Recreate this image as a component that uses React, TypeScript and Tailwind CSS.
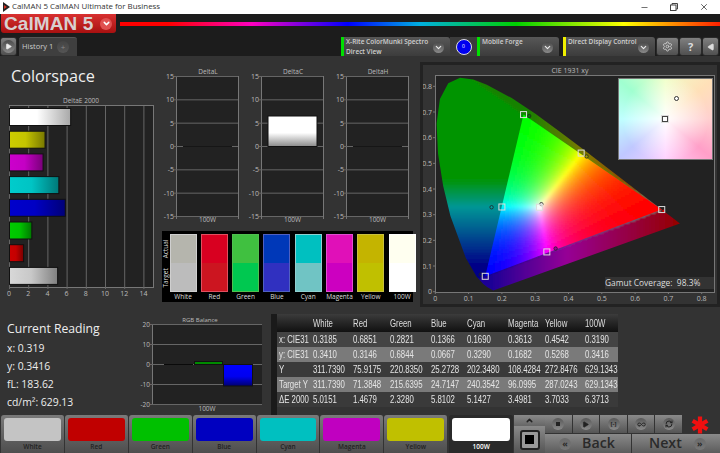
import React, { FC, ReactNode } from 'react'
import { Asterisk, Settings, Play, Infinity as InfinityIcon, RefreshCw, ChevronDown, ChevronUp, Minus, X } from 'lucide-react'

const UI = { fontFamily: '"Open Sans", "Noto Sans", sans-serif' }

// ---- gamut drawing helpers
const RV = [0.68, 0.32], GV = [0.265, 0.69], BV = [0.15, 0.06]
const bary = (x: number, y: number) => {
    const d = (GV[1] - BV[1]) * (RV[0] - BV[0]) + (BV[0] - GV[0]) * (RV[1] - BV[1])
    const r = ((GV[1] - BV[1]) * (x - BV[0]) + (BV[0] - GV[0]) * (y - BV[1])) / d
    const g = ((BV[1] - RV[1]) * (x - BV[0]) + (RV[0] - BV[0]) * (y - BV[1])) / d
    return [r, g, 1 - r - g]
}
const WP = bary(0.3127, 0.329)
const mix = (a: number[], b: number[], t: number) => {
    const k = Math.min(Math.max(t, 0), 1)
    return a.map((v, i) => v + (b[i] - v) * k)
}
const rgb = (c: number[]) => `rgb(${c.map(v => Math.round(v)).join(',')})`

const innerColor = (x: number, y: number) => {
    const c = bary(x, y).map((v, i) => Math.max(v, 0) / WP[i])
    const m = Math.max(...c) || 1
    return rgb(c.map(v => Math.pow(v / m, 1.55) * 255))
}
// the dim part of the horseshoe, outside of the triangle
const outerColor = (x: number, y: number) => {
    const w = bary(x, y)
    if (w[1] < 0) {
        // under the blue-red edge
        const t = (x - 0.17) / 0.56
        return rgb(t < 0.4 ? mix([30, 0, 150], [150, 0, 150], t / 0.4) : mix([150, 0, 150], [150, 0, 0], (t - 0.4) / 0.6))
    }
    if (w[2] < 0) {
        // along the green-red edge
        const t = (x - 0.27) / 0.41
        return rgb(t < 0.45 ? mix([20, 130, 0], [130, 120, 0], t / 0.45) : mix([130, 120, 0], [150, 20, 0], (t - 0.45) / 0.55))
    }
    if (y > 0.33) return rgb(mix([0, 150, 150], [0, 148, 0], (y - 0.33) / 0.11))
    return rgb(mix([0, 0, 135], [0, 150, 150], (y - 0.1) / 0.23))
}
const px = (x: number) => 12.3 + 333 * x
const py = (y: number) => 216.7 - 256.7 * y

const LOCUS = [
    [0.1741, 0.005], [0.1566, 0.0177], [0.144, 0.0297], [0.1241, 0.0578], [0.0913, 0.1327], [0.0454, 0.295],
    [0.0235, 0.4127], [0.0082, 0.5384], [0.0039, 0.6548], [0.0139, 0.7502], [0.0389, 0.812], [0.0743, 0.8338],
    [0.1142, 0.8262], [0.1547, 0.8059], [0.2296, 0.7543], [0.3016, 0.6923], [0.3731, 0.6245], [0.4441, 0.5547],
    [0.5125, 0.4866], [0.5752, 0.4242], [0.627, 0.3725], [0.6915, 0.3083], [0.7347, 0.2653],
]

const outerCells: { x: number; y: number; fill: string }[] = []
const innerCells: { x: number; y: number; fill: string }[] = []
for (let sy = -4; sy < 224; sy += 2) {
    for (let sx = 8; sx < 266; sx += 2) {
        const x = (sx + 1 - 12.3) / 333
        const y = (216.7 - sy - 1) / 256.7
        outerCells.push({ x: sx, y: sy, fill: outerColor(x, y) })
        if (bary(x, y).every(v => v > -0.06)) innerCells.push({ x: sx, y: sy, fill: innerColor(x, y) })
    }
}

const targets = [[0.3127, 0.329], [0.68, 0.32], [0.265, 0.69], [0.15, 0.06], [0.2, 0.33], [0.335, 0.155], [0.438, 0.54]]
const measured = [
    [0.3185, 0.341, '#ddd'], [0.6851, 0.3146, '#e00000'], [0.2821, 0.6844, '#008000'], [0.1366, 0.0667, '#000090'],
    [0.169, 0.329, '#00a0a0'], [0.3613, 0.1682, '#a000a0'], [0.4542, 0.5268, '#a0a000'],
] as [number, number, string][]

const CieChart = () => (
    <svg width={294} height={229} className="block">
        <defs>
            <clipPath id="locus">
                <polygon points={LOCUS.map(p => `${px(p[0])},${py(p[1])}`).join(' ')} />
            </clipPath>
            <clipPath id="gamut">
                <polygon points={[RV, GV, BV].map(p => `${px(p[0])},${py(p[1])}`).join(' ')} />
            </clipPath>
            <filter id="soft" x="-5%" y="-5%" width="110%" height="110%">
                <feGaussianBlur stdDeviation="0.8" />
            </filter>
        </defs>
        <rect x={12.5} y={0.5} width={279} height={217} fill="#222" stroke="#777" />
        <g clipPath="url(#locus)">
            <g filter="url(#soft)" shapeRendering="crispEdges">
                {outerCells.map((c, i) => <rect key={i} x={c.x} y={c.y} width={2.2} height={2.2} fill={c.fill} />)}
            </g>
        </g>
        <g clipPath="url(#gamut)">
            <g filter="url(#soft)" shapeRendering="crispEdges">
                {innerCells.map((c, i) => <rect key={i} x={c.x} y={c.y} width={2.2} height={2.2} fill={c.fill} />)}
            </g>
        </g>
        {[0, 0.1, 0.2, 0.3, 0.4, 0.5, 0.6, 0.7, 0.8].map(t => (
            <g key={t} fontSize={7} fill="#bbb">
                <text x={px(t)} y={226} textAnchor="middle">{t}</text>
                <text x={9} y={py(t) + 2.5} textAnchor="end">{t}</text>
                <line x1={px(t)} x2={px(t)} y1={217} y2={219} stroke="#777" />
                <line x1={10} x2={12} y1={py(t)} y2={py(t)} stroke="#777" />
            </g>
        ))}
        {measured.map((m, i) => (
            <circle key={i} cx={px(m[0])} cy={py(m[1])} r={1.7} fill={m[2]} stroke="#222" strokeWidth={0.8} />
        ))}
        {targets.map((t, i) => (
            <rect key={i} x={px(t[0]) - 3} y={py(t[1]) - 3} width={6} height={6} fill={i === 0 ? '#ffffff90' : 'none'} stroke="#ddd" strokeWidth={1} />
        ))}
    </svg>
)

// ---- bars on the left
const DELTA_BARS = [
    { v: 6.3713, id: 'w2', c: ['#ffffff', '#ffffff', '#a8a8a8'] },
    { v: 3.7033, id: 'y', c: ['#cccc00', '#c4c400', '#787800'] },
    { v: 3.4981, id: 'm', c: ['#cc00cc', '#c400c4', '#780078'] },
    { v: 5.1427, id: 'c', c: ['#00cccc', '#00c4c4', '#007878'] },
    { v: 5.8102, id: 'b', c: ['#0000cc', '#0000c4', '#000078'] },
    { v: 2.328, id: 'g', c: ['#00cc00', '#00c400', '#007800'] },
    { v: 1.4679, id: 'r', c: ['#cc0000', '#c40000', '#780000'] },
    { v: 5.0151, id: 'w', c: ['#d8d8d8', '#c8c8c8', '#808080'] },
]

const DeltaEChart = () => (
    <svg width={160} height={210} className="block">
        <defs>
            {DELTA_BARS.map(b => (
                <linearGradient key={b.id} id={`bar-${b.id}`}>
                    <stop offset="0" stopColor={b.c[0]} />
                    <stop offset="0.45" stopColor={b.c[1]} />
                    <stop offset="1" stopColor={b.c[2]} />
                </linearGradient>
            ))}
        </defs>
        <text x={81} y={7} fontSize={6.5} fill="#bbb" textAnchor="middle">DeltaE 2000</text>
        <rect x={9.5} y={9.5} width={144} height={182} fill="#222" stroke="#777" />
        {[0, 2, 4, 6, 8, 10, 12, 14].map(t => (
            <g key={t}>
                <line x1={9.5 + t * 9.6} x2={9.5 + t * 9.6} y1={10} y2={193} stroke="#666" />
                <text x={9 + t * 9.6} y={200} fontSize={7} fill="#bbb" textAnchor="middle">{t}</text>
            </g>
        ))}
        {DELTA_BARS.map((b, i) => (
            <rect key={b.id} x={9.5} y={12.5 + i * 22.7} width={b.v * 9.6} height={17} fill={`url(#bar-${b.id})`} stroke="#111" />
        ))}
    </svg>
)

const DeltaChart: FC<{ title: string; bar?: boolean }> = ({ title, bar }) => (
    <svg width={85} height={155} className="block">
        <defs>
            <linearGradient id={`dc-${title}`} x1="0" x2="0" y1="0" y2="1">
                <stop offset="0" stopColor="#fff" />
                <stop offset="0.55" stopColor="#fff" />
                <stop offset="1" stopColor="#8a8a8a" />
            </linearGradient>
        </defs>
        <text x={48} y={6} fontSize={6.5} fill="#bbb" textAnchor="middle">{title}</text>
        <rect x={16.5} y={8.5} width={62} height={140} fill="#222" stroke="#777" />
        {[15, 10, 5, 0, -5, -10, -15].map(t => {
            const y = 78.5 - t * 4.667
            return (
                <g key={t}>
                    <line x1={14} x2={78} y1={y} y2={y} stroke="#666" />
                    <text x={14} y={y + 2.5} fontSize={7} fill="#bbb" textAnchor="end">{t}</text>
                </g>
            )
        })}
        {bar
            ? <rect x={23} y={48} width={49} height={30.5} fill={`url(#dc-${title})`} stroke="#111" />
            : <line x1={23} x2={72} y1={78.5} y2={78.5} stroke="#161616" />}
        <line x1={78.5} x2={78.5} y1={148} y2={151} stroke="#777" />
        <line x1={16.5} x2={16.5} y1={148} y2={151} stroke="#777" />
        <text x={47.5} y={154} fontSize={6.5} fill="#bbb" textAnchor="middle">100W</text>
    </svg>
)

const RgbBalance = () => (
    <svg width={124} height={102} className="block">
        <defs>
            <linearGradient id="rgb-blue" x1="0" x2="0" y1="0" y2="1">
                <stop offset="0" stopColor="#0000ff" />
                <stop offset="0.55" stopColor="#0000f0" />
                <stop offset="1" stopColor="#000070" />
            </linearGradient>
        </defs>
        <text x={62} y={12} fontSize={6} fill="#bbb" textAnchor="middle">RGB Balance</text>
        <rect x={14.5} y={14.5} width={110} height={80} fill="#222" stroke="#777" />
        {[20, 10, 0, -10, -20].map(t => {
            const y = 54.5 - t * 2
            return (
                <g key={t}>
                    <line x1={12} x2={124} y1={y} y2={y} stroke="#666" />
                    <text x={12} y={y + 2.5} fontSize={6.5} fill="#bbb" textAnchor="end">{t}</text>
                </g>
            )
        })}
        <line x1={26} x2={55} y1={54.5} y2={54.5} stroke="#0a0a0a" />
        <rect x={56.5} y={51.5} width={28} height={3} fill="#008a00" stroke="#111" />
        <rect x={85.5} y={54.5} width={29} height={21.5} fill="url(#rgb-blue)" stroke="#111" />
        <text x={69} y={101} fontSize={6.5} fill="#bbb" textAnchor="middle">100W</text>
    </svg>
)

// ---- table
const TABLE = [
    { label: 'x: CIE31', bg: 'bg-[#444444]', values: ['0.3185', '0.6851', '0.2821', '0.1366', '0.1690', '0.3613', '0.4542', '0.3190'] },
    { label: 'y: CIE31', bg: 'bg-[#7a7a7a]', values: ['0.3410', '0.3146', '0.6844', '0.0667', '0.3290', '0.1682', '0.5268', '0.3416'] },
    { label: 'Y', bg: 'bg-[#3a3a3a]', values: ['311.7390', '75.9175', '220.8350', '25.2728', '202.3480', '108.4284', '272.8476', '629.1343'] },
    { label: 'Target Y', bg: 'bg-[#7a7a7a]', values: ['311.7390', '71.3848', '215.6395', '24.7147', '240.3542', '96.0995', '287.0243', '629.1343'] },
    { label: 'ΔE 2000', bg: 'bg-[#3a3a3a]', values: ['5.0151', '1.4679', '2.3280', '5.8102', '5.1427', '3.4981', '3.7033', '6.3713'] },
]
const HEADERS = ['White', 'Red', 'Green', 'Blue', 'Cyan', 'Magenta', 'Yellow', '100W']
const TABLE_COLS = 'grid grid-cols-[34px_40px_37px_41px_36px_41px_37px_40px_33px] pl-[2px]'
const TABLE_FONT = { fontFamily: '"Liberation Sans", sans-serif' }

// the font in the picture is narrower than anything installed, so it is squeezed
const Cell: FC<{ children: ReactNode }> = ({ children }) => (
    <span className="block origin-left scale-x-[0.78] whitespace-nowrap">{children}</span>
)

const ReadingTable = () => (
    <div className="w-[347px] mt-[4px] border-l-[6px] border-[#1a1a1a] text-[10px] leading-[15px]" style={TABLE_FONT}>
        <div className={`${TABLE_COLS} h-[18px] items-center text-[#ddd] bg-gradient-to-b from-[#3c3c3c] to-[#111111]`}>
            <span />
            {HEADERS.map(h => <Cell key={h}>{h}</Cell>)}
        </div>
        {TABLE.map(row => (
            <div key={row.label} className={`${TABLE_COLS} h-[15px] text-[#e4e4e4] ${row.bg}`}>
                <Cell>{row.label}</Cell>
                {row.values.map((v, i) => <Cell key={i}>{v}</Cell>)}
            </div>
        ))}
    </div>
)

// ---- palette
const PALETTE = [
    { name: 'White', a: '#b5b5ad', t: '#bcbcbc', b: '#cfcfcf' },
    { name: 'Red', a: '#d80020', t: '#cc1520', b: '#e05060' },
    { name: 'Green', a: '#40c040', t: '#00c850', b: '#50c050' },
    { name: 'Blue', a: '#0038b8', t: '#3030c0', b: '#5060c0' },
    { name: 'Cyan', a: '#00c0c0', t: '#70c4c4', b: '#90d0d0' },
    { name: 'Magenta', a: '#e010b8', t: '#cc00c0', b: '#e050d0' },
    { name: 'Yellow', a: '#c4b400', t: '#c0c000', b: '#c8c040' },
    { name: '100W', a: '#fffff0', t: '#ffffff', b: '#ffffff' },
]

const Palette = () => (
    <div className="ml-[2px] mt-[8px] w-[251px] h-[71px] bg-black flex pt-[3px]">
        <div className="w-[7.5px] h-[58px] flex flex-col text-[6.5px] text-[#ddd]">
            <div className="h-[29px] flex items-center justify-center"><span className="-rotate-90">Actual</span></div>
            <div className="h-[29px] flex items-center justify-center"><span className="-rotate-90">Target</span></div>
        </div>
        {PALETTE.map(p => (
            <div key={p.name} className="w-[27px] mr-[4.3px] shrink-0 flex flex-col items-center">
                <div className="w-[27px] h-[58px] flex flex-col border" style={{ borderColor: p.b }}>
                    <div className="flex-1" style={{ background: p.a }} />
                    <div className="flex-1" style={{ background: p.t }} />
                </div>
                <span className="text-[6.5px] text-[#ddd] leading-[9px]">{p.name}</span>
            </div>
        ))}
    </div>
)

// ---- toolbar pieces
const RoundKnob: FC<{ children?: ReactNode; className?: string }> = ({ children, className = '' }) => (
    <span className={`rounded-full bg-gradient-to-b from-[#4a4a4a] to-[#8a8a8a] flex items-center justify-center ${className}`}>{children}</span>
)

const DeviceBox: FC<{ lines: string[]; color: string; className: string }> = ({ lines, color, className }) => (
    <div className={`h-[19px] rounded-t-[3px] bg-gradient-to-b from-[#585858] to-[#3c3c3c] flex ${className}`}>
        <div className="w-[3px] h-full shrink-0" style={{ background: color }} />
        <div className="flex-1 pl-[2px] text-[6.5px] leading-[9.5px] font-semibold text-[#cfcfcf] whitespace-nowrap">
            {lines.map(l => <div key={l}>{l}</div>)}
        </div>
        <RoundKnob className="w-[11px] h-[11px] mt-[5px] mr-[6px] shrink-0">
            <ChevronDown size={9} color="#eee" strokeWidth={3} />
        </RoundKnob>
    </div>
)

const SquareBtn: FC<{ children: ReactNode; className?: string }> = ({ children, className = '' }) => (
    <div className={`h-[19px] rounded-[3px] border border-[#2a2a2a] bg-gradient-to-b from-[#808080] to-[#505050] flex items-center justify-center ${className}`}>{children}</div>
)

const SWATCHES = [
    ['White', 'bg-[#c4c4c4]'], ['Red', 'bg-[#c00000]'], ['Green', 'bg-[#00c000]'], ['Blue', 'bg-[#0000c0]'],
    ['Cyan', 'bg-[#00c0c0]'], ['Magenta', 'bg-[#c000c0]'], ['Yellow', 'bg-[#c0c000]'],
]

const ControlKey: FC<{ children: ReactNode }> = ({ children }) => (
    <div className="w-[29px] h-[19px] border-r border-b border-[#333] bg-gradient-to-b from-[#8a8a8a] to-[#555555] flex items-center justify-center">
        <RoundKnob className="w-[12px] h-[12px] from-[#585858] to-[#6e6e6e]">{children}</RoundKnob>
    </div>
)

const App = () => {
    return (
        <div className="w-[720px] h-[453px] overflow-hidden flex flex-col bg-[#333333]" style={UI}>
            {/* title bar */}
            <div className="h-[14px] bg-white flex items-center text-[#333] shrink-0">
                <svg width={9} height={10} viewBox="0 0 9 10" className="ml-[2px] mr-[1px]">
                    <polygon points="1,0 8,5 1,10" fill="#222" />
                    <polygon points="2,3 5,5 2,7" fill="#d03020" />
                </svg>
                <span className="text-[7.9px] leading-none">CalMAN 5 CalMAN Ultimate for Business</span>
                <div className="ml-auto flex items-center">
                    <Minus size={9} color="#444" className="mr-[21px]" />
                    <svg width={8} height={8} viewBox="0 0 8 8" className="mr-[21px]" fill="none" stroke="#444">
                        <rect x="0.5" y="2" width="5.5" height="5.5" /><path d="M2 2V0.5H7.5V6H6" />
                    </svg>
                    <X size={10} color="#444" className="mr-[11px]" />
                </div>
            </div>

            {/* logo and rainbow */}
            <div className="h-[23px] bg-[#1c1c1c] flex shrink-0">
                <div className="ml-[1px] w-[115px] h-[19px] rounded-b-[3px] bg-gradient-to-b from-[#d83030] to-[#a81010] flex items-center pl-[3px] text-[#d8d0d0]">
                    <span className="w-[90px] text-[19px] font-bold leading-none tracking-[0.1px] whitespace-nowrap" style={{ fontFamily: '"Liberation Sans", sans-serif' }}>CalMAN 5</span>
                    <span className="ml-[6px] w-[12px] h-[12px] rounded-full bg-[#e05050] flex items-center justify-center">
                        <ChevronDown size={9} color="#fff" strokeWidth={4} />
                    </span>
                </div>
                <div className="ml-[4px] mt-[8px] flex-1 h-[4px] bg-[linear-gradient(90deg,#ff0000_8%,#ff00c0_22%,#0000ff_38%,#00b0e0_50%,#00d000_66%,#ffff00_84%,#ff2000_100%)]" />
            </div>

            {/* toolbar */}
            <div className="h-[19px] bg-[#1c1c1c] flex shrink-0">
                <SquareBtn className="w-[17px]">
                    <RoundKnob className="w-[13px] h-[13px]"><Play size={7} fill="#eee" color="#eee" /></RoundKnob>
                </SquareBtn>
                <div className="ml-[2px] w-[58px] rounded-t-[3px] bg-[#3f3f3f] border-t border-[#555] flex items-center">
                    <span className="text-[7.5px] text-[#ccc] pl-[3px] w-[36px] whitespace-nowrap">History 1</span>
                    <RoundKnob className="w-[12px] h-[12px] ml-[2px] from-[#444] to-[#555] text-[8px] leading-none text-[#888]">+</RoundKnob>
                </div>
                <div className="w-[264px]" />
                <DeviceBox className="w-[109px]" color="#00e000" lines={['X-Rite ColorMunki Spectro', 'Direct View']} />
                <div className="w-[27px] h-[19px] flex items-center justify-center bg-[#3c3c3c]">
                    <span className="w-[16px] h-[16px] rounded-full bg-[#0000f0] border border-[#ddd] text-[5px] text-white flex items-center justify-center">0</span>
                </div>
                <DeviceBox className="w-[82px]" color="#00e000" lines={['Mobile Forge']} />
                <div className="w-[4px]" />
                <DeviceBox className="w-[92px]" color="#f0f000" lines={['Direct Display Control']} />
                <SquareBtn className="w-[23px] ml-[1px]"><Settings size={11} color="#ccc" /></SquareBtn>
                <SquareBtn className="w-[23px]"><span className="text-[11px] font-bold text-[#ddd] leading-none">?</span></SquareBtn>
                <SquareBtn className="w-[17px]"><Play size={8} fill="#ddd" color="#ddd" className="rotate-180" /></SquareBtn>
            </div>

            {/* upper charts */}
            <div className="h-[254px] flex shrink-0">
                <div className="w-[160px]">
                    <div className="h-[40px] pl-[11px] pt-[8px] text-[16.2px] leading-[24px] text-[#eee]">Colorspace</div>
                    <DeltaEChart />
                </div>
                <div className="w-[260px] pt-[12px]">
                    <div className="flex">
                        <DeltaChart title="DeltaL" />
                        <DeltaChart title="DeltaC" bar />
                        <DeltaChart title="DeltaH" />
                    </div>
                    <Palette />
                </div>
                <div className="w-[300px] mt-[6px] h-[245px] border-[3px] border-[#222] bg-[#333]">
                    <div className="relative w-[294px]">
                        <div className="h-[10px] text-center text-[7px] leading-[12px] text-[#bbb]">CIE 1931 xy</div>
                        <CieChart />
                        <div className="absolute left-[195px] top-[13px] w-[95px] h-[82px] border border-[#777] bg-[radial-gradient(circle,#ffffff_0%,#ffffff00_70%),conic-gradient(#f0ffc8,#ffe0b8_50deg,#ffd0d0_90deg,#ff9fc8_130deg,#ffd0ff_180deg,#c0c8ff_230deg,#c0ffff_270deg,#a0ffd0_310deg,#f0ffc8)]">
                            <span className="absolute left-[43px] top-[37px] w-[6px] h-[6px] border border-[#444] outline outline-1 outline-[#ddd]" />
                            <span className="absolute left-[55px] top-[17px] w-[5px] h-[5px] rounded-full bg-white border border-[#333]" />
                        </div>
                        <div className="absolute left-[182px] top-[212px] w-[109px] h-[12px] bg-[#333] text-[8.4px] leading-[12px] text-[#ddd] whitespace-nowrap">Gamut Coverage:&nbsp; 98.3%</div>
                    </div>
                </div>
            </div>

            {/* reading row */}
            <div className="h-[105px] flex shrink-0">
                <div className="w-[138px] pl-[7px] pt-[11px] text-[#eee]">
                    <div className="text-[12.2px] leading-[16px] mb-[2px]">Current Reading</div>
                    {['x: 0.319', 'y: 0.3416', 'fL: 183.62', 'cd/m²: 629.13'].map(t => (
                        <div key={t} className="text-[10.4px] leading-[18px]">{t}</div>
                    ))}
                </div>
                <RgbBalance />
                <div className="w-[9px]" />
                <ReadingTable />
            </div>

            {/* swatches and controls */}
            <div className="h-[38px] flex shrink-0 bg-[#333]">
                {SWATCHES.map(([name, bg]) => (
                    <div key={name} className="w-[64px] ml-[1px] -mr-[1px] rounded-t-[3px] border-r border-[#333] bg-gradient-to-b from-[#7a7a7a] to-[#4e4e4e] px-[3px] pt-[3px] flex flex-col items-center">
                        <div className={`w-full h-[23px] rounded-[3px] ${bg}`} />
                        <span className="text-[6.5px] font-semibold text-[#222] leading-[9px] mt-[1px]">{name}</span>
                    </div>
                ))}
                <div className="w-[64px] ml-[2px] rounded-t-[3px] bg-[#2a2a2a] px-[3px] pt-[3px] flex flex-col items-center">
                    <div className="w-full h-[23px] rounded-[3px] bg-white" />
                    <span className="text-[6.5px] font-semibold text-white leading-[9px] mt-[1px]">100W</span>
                </div>
                <div className="w-[31px] ml-[1px] flex flex-col">
                    <div className="h-[11px] bg-gradient-to-b from-[#8a8a8a] to-[#666] flex items-center justify-center">
                        <ChevronUp size={9} color="#222" strokeWidth={4} />
                    </div>
                    <div className="flex-1 bg-gradient-to-b from-[#8a8a8a] to-[#555] flex items-center justify-center">
                        <span className="w-[20px] h-[20px] rounded-[3px] border-2 border-[#222] bg-[#999] flex items-center justify-center">
                            <span className="w-[9px] h-[9px] bg-black" />
                        </span>
                    </div>
                </div>
                <div className="w-[175px] flex flex-col">
                    <div className="flex h-[19px]">
                        <ControlKey><span className="w-[4px] h-[4px] bg-[#222]" /></ControlKey>
                        <ControlKey><Play size={7} fill="#222" color="#222" /></ControlKey>
                        <ControlKey><span className="text-[6px] font-bold leading-none text-[#222]">[-]</span></ControlKey>
                        <ControlKey><InfinityIcon size={9} color="#222" strokeWidth={2.5} /></ControlKey>
                        <ControlKey><RefreshCw size={8} color="#222" strokeWidth={3} /></ControlKey>
                        <div className="flex-1 flex items-center justify-center pr-[3px]">
                            <Asterisk size={34} color="#f01010" strokeWidth={3} strokeLinecap="butt" className="shrink-0 -my-[8px]" />
                        </div>
                    </div>
                    <div className="flex h-[19px]">
                        <div className="w-[87px] border-r border-[#333] bg-gradient-to-b from-[#8a8a8a] to-[#5c5c5c] flex items-center pl-[14px] text-[#2a2a2a]">
                            <RoundKnob className="w-[12px] h-[12px] from-[#6a6a6a] to-[#767676] text-[9px] leading-none font-bold">«</RoundKnob>
                            <span className="ml-[11px] text-[14.2px] font-semibold leading-none">Back</span>
                        </div>
                        <div className="flex-1 bg-gradient-to-b from-[#8a8a8a] to-[#5c5c5c] flex items-center pl-[17px] text-[#2a2a2a]">
                            <span className="text-[14.2px] font-semibold leading-none">Next</span>
                            <RoundKnob className="w-[12px] h-[12px] ml-[12px] from-[#6a6a6a] to-[#767676] text-[9px] leading-none font-bold">»</RoundKnob>
                        </div>
                    </div>
                </div>
            </div>
        </div>
    )
}

export default App
